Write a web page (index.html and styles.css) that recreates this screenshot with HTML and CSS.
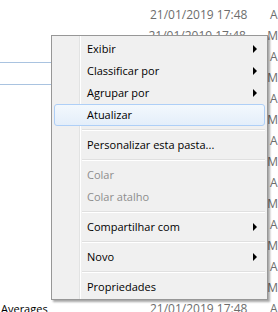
FILE: index.html
```html
<!DOCTYPE html>
<html>
<head>
<meta charset="utf-8">
<link rel="stylesheet" href="styles.css">
</head>
<body>
<div class="list">
  <div class="row"><span class="name"></span><span class="date">21/01/2019 17:48</span><span class="type">A</span></div>
  <div class="row"><span class="name"></span><span class="date">21/01/2019 17:48</span><span class="type">M</span></div>
  <div class="row"><span class="name"></span><span class="date">21/01/2019 17:48</span><span class="type">A</span></div>
  <div class="row"><span class="name"></span><span class="date">21/01/2019 17:48</span><span class="type">M</span></div>
  <div class="row"><span class="name"></span><span class="date">21/01/2019 17:48</span><span class="type">A</span></div>
  <div class="row"><span class="name"></span><span class="date">21/01/2019 17:48</span><span class="type">M</span></div>
  <div class="row"><span class="name"></span><span class="date">21/01/2019 17:48</span><span class="type">A</span></div>
  <div class="row"><span class="name"></span><span class="date">21/01/2019 17:48</span><span class="type">M</span></div>
  <div class="row"><span class="name"></span><span class="date">21/01/2019 17:48</span><span class="type">A</span></div>
  <div class="row"><span class="name"></span><span class="date">21/01/2019 17:48</span><span class="type">M</span></div>
  <div class="row"><span class="name"></span><span class="date">21/01/2019 17:48</span><span class="type">A</span></div>
  <div class="row"><span class="name"></span><span class="date">21/01/2019 17:48</span><span class="type">M</span></div>
  <div class="row"><span class="name"></span><span class="date">21/01/2019 17:48</span><span class="type">A</span></div>
  <div class="row"><span class="name"></span><span class="date">21/01/2019 17:48</span><span class="type">M</span></div>
  <div class="row"><span class="name">Averages</span><span class="date">21/01/2019 17:48</span><span class="type">A</span></div>
</div>
<div class="selbox"></div>

<div class="menu">
  <div class="item sub">Exibir</div>
  <div class="item sub">Classificar por</div>
  <div class="item sub">Agrupar por</div>
  <div class="item hover">Atualizar</div>
  <div class="sep"></div>
  <div class="item">Personalizar esta pasta...</div>
  <div class="sep"></div>
  <div class="item disabled">Colar</div>
  <div class="item disabled">Colar atalho</div>
  <div class="sep"></div>
  <div class="item sub">Compartilhar com</div>
  <div class="sep"></div>
  <div class="item sub">Novo</div>
  <div class="sep"></div>
  <div class="item">Propriedades</div>
</div>
</body>
</html>
```
FILE: styles.css
```css
html, body {
  margin: 0;
  padding: 0;
  background: #ffffff;
  width: 278px;
  height: 312px;
  overflow: hidden;
  font-family: "Open Sans", "Noto Sans", sans-serif;
  font-size: 12px;
}

.list {
  padding-top: 4px;
}

.row {
  height: 21px;
  line-height: 21px;
  display: flex;
  white-space: nowrap;
  box-sizing: border-box;
}

.selbox {
  position: absolute;
  left: 0;
  top: 62px;
  width: 60px;
  height: 21px;
  border-top: 1px solid #a9c3e0;
  border-bottom: 1px solid #a9c3e0;
}

.name {
  width: 150px;
  padding-left: 1px;
  box-sizing: border-box;
  color: #000;
  font-size: 11px;
}

.date {
  width: 120px;
  color: #6d6d6d;
}

.type {
  color: #6d6d6d;
}

.menu {
  position: absolute;
  left: 51px;
  top: 35px;
  width: 217px;
  height: 265px;
  box-sizing: border-box;
  border: 1px solid #979797;
  background: #f0f0f0 linear-gradient(to right, transparent 27px, #e2e3e3 27px, #e2e3e3 28px, #ffffff 28px, #ffffff 29px, transparent 29px);
  box-shadow: 2px 2px 2px rgba(0, 0, 0, 0.35);
  padding: 2px;
  font-size: 11px;
}

.item {
  position: relative;
  height: 22px;
  line-height: 22px;
  padding-left: 33px;
  color: #000;
  box-sizing: border-box;
  white-space: nowrap;
}

.item.hover {
  border: 1px solid #aecff7;
  border-radius: 3px;
  background: linear-gradient(#f3f8fd, #e4eefa);
  line-height: 20px;
  padding-left: 32px;
}

.item.disabled {
  color: #8d8d8d;
}

.item.sub::after {
  content: "";
  position: absolute;
  right: 8px;
  top: 7px;
  border-left: 4px solid #000;
  border-top: 4px solid transparent;
  border-bottom: 4px solid transparent;
}

.sep {
  height: 8px;
  margin-left: 28px;
  background: linear-gradient(transparent 3px, #e0e0e0 3px, #e0e0e0 4px, #ffffff 4px, #ffffff 5px, transparent 5px);
}
```
